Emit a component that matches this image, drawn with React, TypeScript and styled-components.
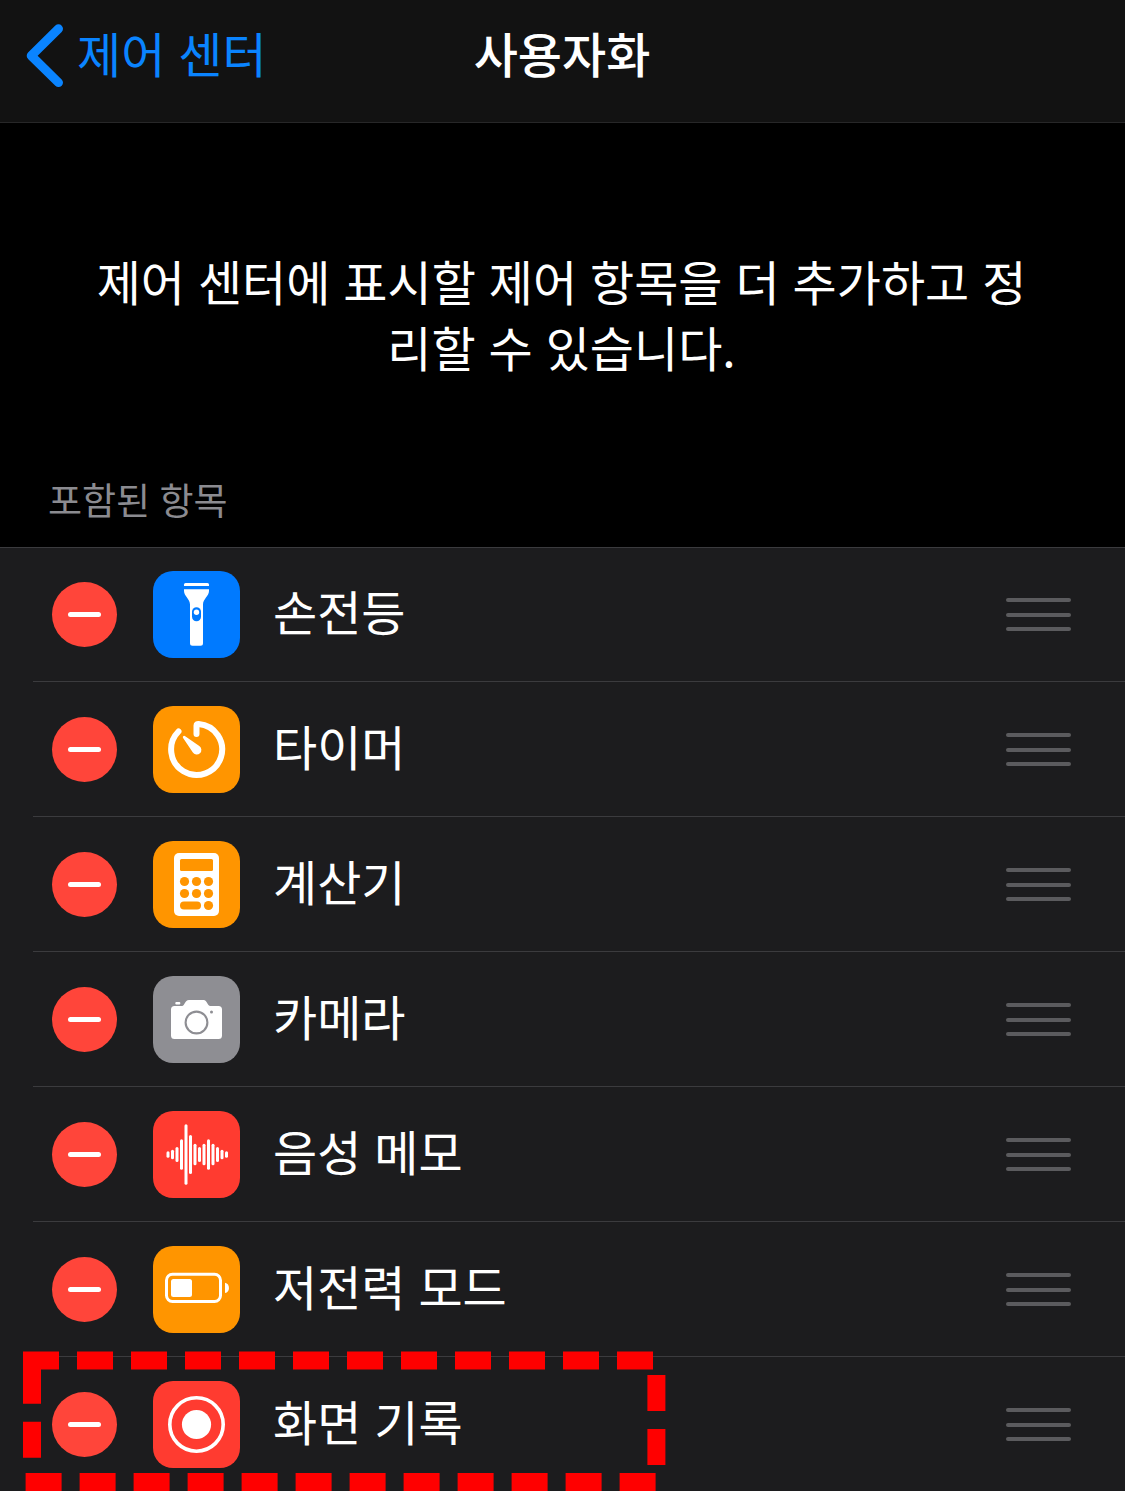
import React from "react";
import styled, { createGlobalStyle } from "styled-components";

const GlobalStyle = createGlobalStyle`
  * { box-sizing: border-box; }
  body {
    margin: 0;
    background: #000;
    color: #fff;
    font-family: "Noto Sans CJK KR", "Liberation Sans", sans-serif;
    word-spacing: 2.2px;
  }
`;

const Screen = styled.main`
  position: relative;
  width: 1125px;
  height: 1491px;
  overflow: hidden;
  background: #000;
`;

const NavBar = styled.header`
  display: grid;
  grid-template-columns: 1fr auto 1fr;
  height: 123px;
  padding: 0 27px 18px 26px;
  align-items: center;
  background: #121212;
  border-bottom: 1px solid #272728;
`;

const BackButton = styled.button`
  display: flex;
  align-items: center;
  gap: 14px;
  padding: 0;
  border: 0;
  background: none;
  color: #0a84ff;
  font: inherit;
  font-size: 48px;
  font-weight: 400;
  line-height: 66px;
  word-spacing: inherit;
`;

const Chevron = styled.svg`
  width: 37px;
  height: 64px;
  margin-top: 8px;
`;

const Title = styled.h1`
  margin: 0;
  font-size: 48px;
  font-weight: 500;
  line-height: 66px;
`;

const Intro = styled.p`
  margin: 0;
  padding: 124px 2px 0 0;
  font-size: 48px;
  font-weight: 400;
  line-height: 66px;
  text-align: center;
`;

const SectionLabel = styled.h2`
  margin: 0;
  padding: 94px 0 0 48px;
  height: 168px;
  color: #8b8b90;
  font-size: 37px;
  font-weight: 400;
  line-height: 52px;
  word-spacing: 1px;
`;

const List = styled.ul`
  margin: 0;
  padding: 0 0 0 33px;
  list-style: none;
  background: #1c1c1e;
  box-shadow: inset 0 1px #3b3b3e;
`;

const Row = styled.li`
  display: flex;
  align-items: center;
  height: 135px;
  padding: 1px 54px 0 19px;
  border-bottom: 1px solid #3b3b3e;

  &:last-child {
    height: 134px;
    border-bottom: 0;
  }
`;

const RemoveButton = styled.button`
  display: flex;
  flex: none;
  align-items: center;
  justify-content: center;
  width: 65px;
  height: 65px;
  padding: 0;
  border: 0;
  border-radius: 50%;
  background: #ff453a;

  &::before {
    content: "";
    width: 33px;
    height: 5px;
    border-radius: 3px;
    background: #fff;
  }
`;

const Tile = styled.svg<{ $color: string }>`
  flex: none;
  width: 87px;
  height: 87px;
  margin-left: 36px;
  border-radius: 20px;
  background: ${(p) => p.$color};
`;

const Label = styled.span`
  flex: 1;
  margin-left: 33px;
  padding-bottom: 10px;
  font-size: 48px;
  font-weight: 400;
  line-height: 66px;
`;

const Handle = styled.div`
  display: flex;
  flex-direction: column;
  justify-content: space-between;
  width: 65px;
  height: 33px;
`;

const HandleBar = styled.i`
  height: 4px;
  border-radius: 2px;
  background: #5b5b5e;
`;

const Highlight = styled.svg`
  position: absolute;
  left: 0;
  top: 1341px;
  width: 700px;
  height: 150px;
  pointer-events: none;
`;

const BLUE = "#007aff";
const ORANGE = "#ff9500";
const GRAY = "#8e8e93";
const RED = "#ff3b30";

const flashlight = (
  <>
    <path d="M31 15V13.5Q31 12 32.5 12H54.5Q56 12 56 13.5V15Z" fill="#fff" />
    <path
      d="M31 18.3H56V20C56 25 50 28 50 33.5V72.2Q50 74.7 47.5 74.7H39.5Q37 74.7 37 72.2V33.5C37 28 31 25 31 20Z"
      fill="#fff"
    />
    <rect x="39" y="36.3" width="9" height="14" rx="4.5" fill={BLUE} />
    <circle cx="43.5" cy="41.2" r="2.7" fill="#fff" />
  </>
);

const timer = (
  <>
    <path
      d="M43.5 28V19.5Q43.5 17.8 45.6 18A25.5 25.5 0 1 1 25.5 25.5"
      fill="none"
      stroke="#fff"
      strokeWidth="6"
      strokeLinecap="round"
      strokeLinejoin="round"
    />
    <path d="M30.2 30.2Q31 29.4 32.2 30.2L46.3 39.9A4.7 4.7 0 1 1 39.7 46.3L30.1 32Q29.4 31 30.2 30.2Z" fill="#fff" />
  </>
);

const calculator = (
  <>
    <rect x="21" y="12" width="45" height="63" rx="5" fill="#fff" />
    <g fill={ORANGE}>
      <rect x="27" y="18" width="33" height="12" rx="1.5" />
      {[40.5, 52.5].map((y) => [31.5, 43.5, 55.5].map((x) => <circle key={`${x}-${y}`} cx={x} cy={y} r="4.6" />))}
      <rect x="27" y="60.5" width="21" height="8" rx="4" />
      <circle cx="55.5" cy="64.5" r="4.6" />
    </g>
  </>
);

const camera = (
  <>
    <rect x="22.3" y="26" width="5" height="2.5" rx="1" fill="#fff" />
    <path
      d="M21.5 30H29C32 30 31.5 24 36 24H50.5C54.5 24 54 30 57.5 30H65.5Q69 30 69 33.5V59.5Q69 63 65.5 63H21.5Q18 63 18 59.5V33.5Q18 30 21.5 30Z"
      fill="#fff"
    />
    <circle cx="43.5" cy="46.5" r="10.9" fill="none" stroke={GRAY} strokeWidth="2.1" />
    <circle cx="58.5" cy="36" r="1.5" fill={GRAY} />
  </>
);

const WAVE = [3.3, 4.7, 7.5, 15.2, 30.3, 19.5, 10.7, 7.5, 10.7, 15.2, 10.7, 7.5, 4.7, 3.3];

const voice = (
  <g fill="#fff">
    {WAVE.map((h, i) => (
      <rect key={i} x={13.5 + i * 4.5} y={43.5 - h} width="3" height={h * 2} rx="1.5" />
    ))}
  </g>
);

const battery = (
  <>
    <rect x="13.5" y="28.3" width="54" height="27.2" rx="6" fill="none" stroke="#fff" strokeWidth="3" />
    <rect x="18" y="33" width="21" height="18" rx="2.5" fill="#fff" />
    <path d="M72 36.7C77.3 37.5 77.3 46.2 72 47Z" fill="#fff" />
  </>
);

const record = (
  <>
    <circle cx="43.5" cy="43.5" r="26.7" fill="none" stroke="#fff" strokeWidth="3.6" />
    <circle cx="43.5" cy="43.5" r="14.6" fill="#fff" />
  </>
);

const controls = [
  { label: "손전등", color: BLUE, icon: flashlight },
  { label: "타이머", color: ORANGE, icon: timer },
  { label: "계산기", color: ORANGE, icon: calculator },
  { label: "카메라", color: GRAY, icon: camera },
  { label: "음성 메모", color: RED, icon: voice },
  { label: "저전력 모드", color: ORANGE, icon: battery },
  { label: "화면 기록", color: RED, icon: record },
];

export default function App() {
  return (
    <Screen>
      <GlobalStyle />
      <NavBar>
        <BackButton>
          <Chevron viewBox="0 0 37 64">
            <path
              d="M32.5 4.8L5.2 31.7L32.5 58.6"
              fill="none"
              stroke="currentColor"
              strokeWidth="9"
              strokeLinecap="round"
              strokeLinejoin="round"
            />
          </Chevron>
          제어 센터
        </BackButton>
        <Title>사용자화</Title>
      </NavBar>
      <Intro>
        제어 센터에 표시할 제어 항목을 더 추가하고 정<br />
        리할 수 있습니다.
      </Intro>
      <SectionLabel>포함된 항목</SectionLabel>
      <List>
        {controls.map((c) => (
          <Row key={c.label}>
            <RemoveButton aria-label="제거" />
            <Tile $color={c.color} viewBox="0 0 87 87">
              {c.icon}
            </Tile>
            <Label>{c.label}</Label>
            <Handle>
              <HandleBar />
              <HandleBar />
              <HandleBar />
            </Handle>
          </Row>
        ))}
      </List>
      <Highlight viewBox="0 0 700 150">
        <g stroke="#f00" strokeWidth="18" strokeDasharray="36 18">
          <path d="M23 19.4H654" />
          <path d="M32 26.7V117" />
          <path d="M25.6 141H656" />
          <path d="M656.4 34V125" />
        </g>
        <path d="M23 20H41V40H23Z" fill="#f00" />
      </Highlight>
    </Screen>
  );
}
